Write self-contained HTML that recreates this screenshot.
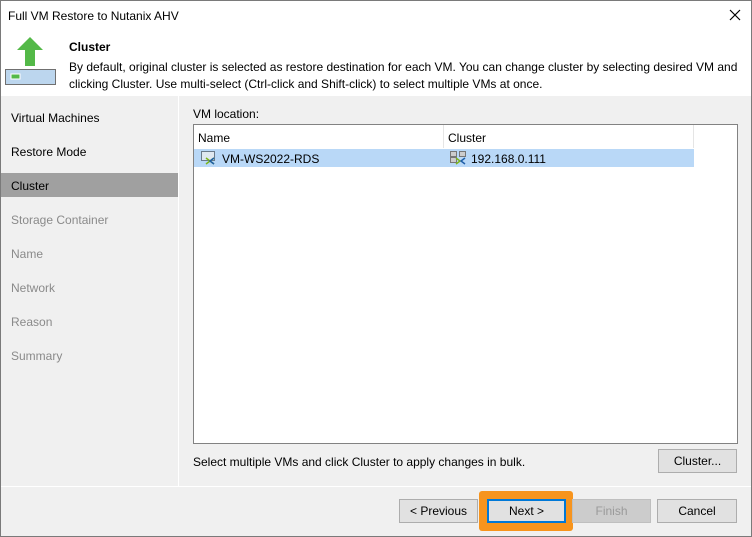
<!DOCTYPE html>
<html><head><style>
*{margin:0;padding:0;box-sizing:border-box}
body{width:752px;height:537px;overflow:hidden;font-family:"Liberation Sans",sans-serif;font-size:12px;color:#000;background:#f0f0f0;position:relative}
.a{position:absolute;white-space:nowrap}
.btn{position:absolute;background:#e1e1e1;border:1px solid #adadad;text-align:center;line-height:22px;font-size:12px}
</style></head><body>
<div class="a" style="left:0;top:0;width:752px;height:96px;background:#fff"></div>
<div class="a" style="left:8px;top:9px;font-size:12px">Full VM Restore to Nutanix AHV</div>
<svg class="a" style="left:728px;top:8px" width="14" height="14"><path d="M2 2L12 12M12 2L2 12" stroke="#000" stroke-width="1.2"/></svg>
<svg class="a" style="left:5px;top:36px" width="52" height="50">
<path d="M25 1L38 14H30V30H20V14H12Z" fill="#54b948"/>
<rect x="0.5" y="33.5" width="50" height="15" fill="#bcd6ee" stroke="#707070"/>
<rect x="6" y="38" width="9" height="5" fill="#54b948" stroke="#fff" stroke-width="1"/>
</svg>
<div class="a" style="left:69px;top:40px;font-weight:bold">Cluster</div>
<div class="a" style="left:69px;top:59px;line-height:17px">By default, original cluster is selected as restore destination for each VM. You can change cluster by selecting desired VM and<br>clicking Cluster. Use multi-select (Ctrl-click and Shift-click) to select multiple VMs at once.</div>
<div class="a" style="left:178px;top:96px;width:1px;height:390px;background:#fff"></div>
<div class="a" style="left:0;top:486px;width:752px;height:1px;background:#fff"></div>
<div class="a" style="left:0;top:173px;width:178px;height:24px;background:#a0a0a0"></div>
<div class="a" style="left:11px;top:111px">Virtual Machines</div>
<div class="a" style="left:11px;top:145px">Restore Mode</div>
<div class="a" style="left:11px;top:179px">Cluster</div>
<div class="a" style="left:11px;top:213px;color:#8a8a8a">Storage Container</div>
<div class="a" style="left:11px;top:247px;color:#8a8a8a">Name</div>
<div class="a" style="left:11px;top:281px;color:#8a8a8a">Network</div>
<div class="a" style="left:11px;top:315px;color:#8a8a8a">Reason</div>
<div class="a" style="left:11px;top:349px;color:#8a8a8a">Summary</div>
<div class="a" style="left:193px;top:107px">VM location:</div>
<div class="a" style="left:193px;top:124px;width:545px;height:320px;background:#fff;border:1px solid #828282"></div>
<div class="a" style="left:443px;top:125px;width:1px;height:23px;background:#e5e5e5"></div>
<div class="a" style="left:693px;top:125px;width:1px;height:23px;background:#e5e5e5"></div>
<div class="a" style="left:198px;top:131px">Name</div>
<div class="a" style="left:448px;top:131px">Cluster</div>
<div class="a" style="left:194px;top:149px;width:500px;height:18px;background:#b9d8f7"></div>
<svg class="a" style="left:201px;top:151px" width="16" height="14"><rect x="0.5" y="0.5" width="13" height="9" fill="#dfe8f0" stroke="#6a7a8a"/><path d="M5 7L9 10L5 13M13 7L9 10L13 13" stroke="#7cb518" stroke-width="1.5" fill="none"/><path d="M13 7L9 10L13 13" stroke="#1f5fa8" stroke-width="1.5" fill="none"/></svg>
<div class="a" style="left:222px;top:152px">VM-WS2022-RDS</div>
<svg class="a" style="left:450px;top:151px" width="18" height="14"><rect x="0.5" y="0.5" width="6" height="5" fill="#ccc" stroke="#777"/><rect x="9.5" y="0.5" width="6" height="5" fill="#ccc" stroke="#777"/><rect x="0.5" y="6.5" width="6" height="5" fill="#ccc" stroke="#777"/><path d="M6 7L10 10L6 13" stroke="#7cb518" stroke-width="1.5" fill="none"/><path d="M15 7L11 10L15 13" stroke="#1f5fa8" stroke-width="1.5" fill="none"/></svg>
<div class="a" style="left:471px;top:152px">192.168.0.111</div>
<div class="a" style="left:193px;top:455px">Select multiple VMs and click Cluster to apply changes in bulk.</div>
<div class="btn" style="left:658px;top:449px;width:79px;height:24px">Cluster...</div>
<div class="btn" style="left:399px;top:499px;width:79px;height:24px">&lt; Previous</div>
<div class="a" style="left:479px;top:491px;width:94px;height:40px;background:#f7941d;border-radius:3px"></div>
<div class="btn" style="left:487px;top:499px;width:79px;height:24px;border:2px solid #0078d7;line-height:20px">Next &gt;</div>
<div class="btn" style="left:572px;top:499px;width:79px;height:24px;background:#cccccc;border-color:#bfbfbf;color:#9a9a9a">Finish</div>
<div class="btn" style="left:657px;top:499px;width:80px;height:24px">Cancel</div>
<div class="a" style="left:0;top:0;width:752px;height:537px;border:1px solid #7a7a7a"></div>
</body></html>
